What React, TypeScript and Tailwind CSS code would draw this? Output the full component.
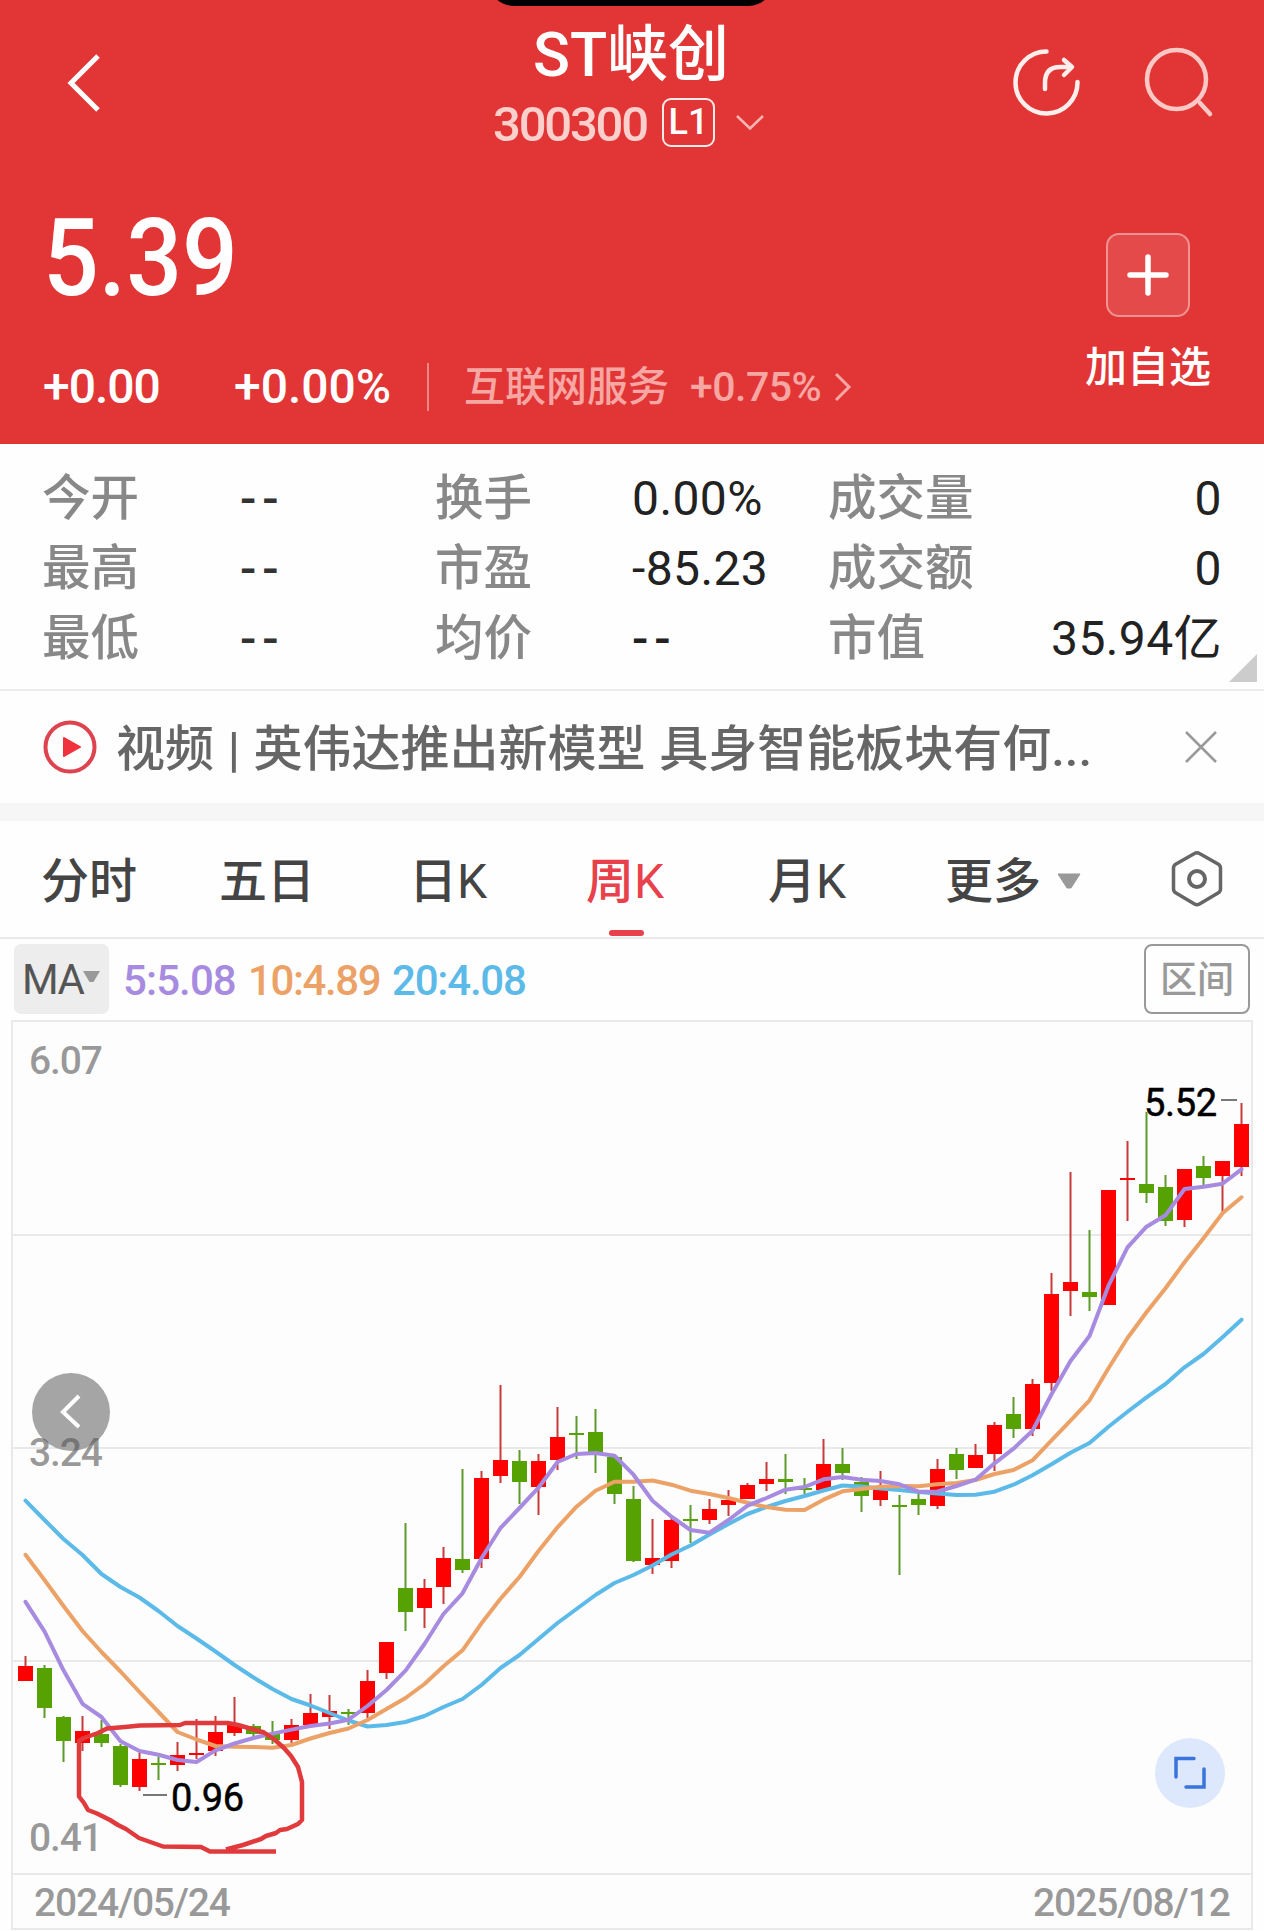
import React from 'react';

type Candle = [up: number, high: number, top: number, bottom: number, low: number];

// [1 = rise / 0 = fall, high, body top, body bottom, low] in chart pixels
const CANDLES: Candle[] = [
  [1, 1656, 1666, 1681, 1681], [0, 1665, 1668, 1708, 1718], [0, 1716, 1717, 1741, 1762], [1, 1716, 1731, 1743, 1751],
  [0, 1720, 1734, 1743, 1747], [0, 1744, 1746, 1785, 1787], [1, 1753, 1759, 1787, 1791], [0, 1757, 1763, 1765, 1780],
  [1, 1742, 1755, 1765, 1771], [1, 1719, 1753, 1755, 1759], [1, 1716, 1732, 1751, 1756], [1, 1697, 1725, 1733, 1736],
  [0, 1724, 1726, 1734, 1737], [0, 1721, 1733, 1740, 1744], [1, 1719, 1725, 1740, 1743], [1, 1694, 1713, 1725, 1725],
  [1, 1695, 1711, 1717, 1729], [0, 1709, 1712, 1714, 1725], [1, 1670, 1681, 1713, 1718], [1, 1642, 1642, 1673, 1679],
  [0, 1523, 1588, 1612, 1631], [1, 1579, 1588, 1608, 1628], [1, 1547, 1558, 1587, 1604], [0, 1469, 1559, 1570, 1573],
  [1, 1471, 1478, 1559, 1568], [1, 1385, 1460, 1476, 1483], [0, 1450, 1461, 1482, 1504], [1, 1454, 1461, 1487, 1515],
  [1, 1407, 1437, 1460, 1470], [0, 1416, 1433, 1435, 1459], [0, 1409, 1432, 1453, 1473], [0, 1456, 1457, 1494, 1504],
  [0, 1486, 1499, 1561, 1562], [1, 1519, 1558, 1565, 1574], [1, 1517, 1520, 1561, 1568], [0, 1505, 1519, 1521, 1543],
  [1, 1499, 1509, 1520, 1524], [1, 1490, 1500, 1505, 1516], [1, 1483, 1485, 1499, 1499], [1, 1462, 1479, 1484, 1491],
  [0, 1454, 1479, 1482, 1494], [0, 1478, 1488, 1490, 1494], [1, 1439, 1464, 1490, 1490], [0, 1448, 1464, 1473, 1480],
  [0, 1477, 1482, 1496, 1512], [1, 1471, 1489, 1500, 1506], [0, 1495, 1505, 1507, 1575], [0, 1493, 1499, 1505, 1515],
  [1, 1459, 1469, 1506, 1509], [0, 1448, 1454, 1470, 1479], [1, 1444, 1455, 1468, 1468], [1, 1422, 1425, 1454, 1471],
  [0, 1397, 1414, 1429, 1438], [1, 1379, 1384, 1429, 1436], [1, 1273, 1294, 1383, 1391], [1, 1172, 1282, 1291, 1316],
  [0, 1230, 1292, 1297, 1311], [1, 1190, 1190, 1305, 1305], [1, 1141, 1178, 1180, 1221], [0, 1112, 1184, 1193, 1203],
  [0, 1175, 1187, 1221, 1226], [1, 1169, 1169, 1220, 1227], [0, 1156, 1166, 1178, 1186], [1, 1161, 1161, 1176, 1212],
  [1, 1103, 1124, 1167, 1176],
];

const MA_LINES = [
  {
    color: '#5cbae8',
    ys: [1500.6, 1520, 1539, 1555, 1574, 1587, 1597.5, 1611, 1626, 1638.5, 1651.5, 1665, 1677.5, 1689, 1699, 1705.5, 1713, 1720.5, 1726.5, 1725, 1722, 1716, 1707, 1699, 1685, 1668, 1655, 1639, 1623, 1609, 1595, 1583, 1575, 1565.5, 1554.5, 1545.5, 1534.5, 1524, 1514, 1507, 1501, 1496, 1490.5, 1485.5, 1486.5, 1488.5, 1490, 1492, 1493.5, 1495, 1494.7, 1491.7, 1484.7, 1475.3, 1464.3, 1452.7, 1443, 1426.7, 1411.7, 1397.3, 1384, 1367.3, 1354, 1337.3, 1319.7],
  },
  {
    color: '#eca267',
    ys: [1554.8, 1580, 1606, 1631, 1652, 1671.5, 1692, 1712, 1732, 1739.5, 1746, 1746.7, 1747, 1747.8, 1745, 1738.5, 1733, 1728.5, 1720, 1709, 1698, 1684, 1666.3, 1650.3, 1623.3, 1598.7, 1577, 1551, 1527.3, 1506.7, 1490.7, 1481.7, 1481.7, 1480.5, 1484.7, 1490.7, 1494, 1498, 1502.7, 1507, 1509.7, 1510, 1499.7, 1491.3, 1489, 1486.7, 1486, 1486.3, 1484.3, 1483, 1480, 1474, 1470, 1460.3, 1440.3, 1420.7, 1400.3, 1368.3, 1338, 1312.3, 1288.3, 1262.3, 1238.3, 1213.3, 1197.3],
  },
  {
    color: '#a78be0',
    ys: [1601.8, 1631.3, 1670.3, 1703.8, 1717, 1741.3, 1751, 1754.8, 1760, 1762, 1750.4, 1743.5, 1738, 1733.6, 1729.6, 1726, 1723.5, 1719.7, 1706, 1690, 1670.7, 1644, 1614, 1593.3, 1558.3, 1528, 1508, 1487.7, 1462, 1454, 1453, 1455.7, 1474.7, 1500.7, 1516.7, 1530, 1532.7, 1520, 1505.7, 1498, 1489.7, 1487, 1479.3, 1477, 1479.7, 1481, 1484.3, 1491.7, 1491.5, 1486, 1479.7, 1463.3, 1448.7, 1430.7, 1394.3, 1361, 1336, 1285.7, 1247.3, 1226.7, 1215.3, 1189, 1186.7, 1183.7, 1169.3],
  },
];

const STATS = [
  [['今开', '--'], ['换手', '0.00%'], ['成交量', '0']],
  [['最高', '--'], ['市盈', '-85.23'], ['成交额', '0']],
  [['最低', '--'], ['均价', '--'], ['市值', '35.94亿']],
];

const xAt = (i: number) => 26 + i * 19;

const Header: React.FC = () => (
  <header className="relative h-[444px] bg-[#e23636] text-white">
    <div className="absolute -top-[22px] left-[488px] h-[28px] w-[286px] rounded-b-[26px] bg-black"></div>
    <div className="flex h-[160px] pt-[18px]">
      <svg className="ml-[60px] mt-[32px] h-[66px] w-[50px]" viewBox="0 0 50 66" fill="none" stroke="currentColor" strokeWidth="5">
        <path d="M38 6 L11 33 L38 60" />
      </svg>
      <div className="ml-[383px] w-[290px]">
        <h1 className="ml-[40px] h-[71px] whitespace-nowrap text-[61px] leading-[75px] font-medium">ST峡创</h1>
        <div className="flex h-[66px] items-center">
          <span className="w-[169px] pt-[5px] text-[49px] leading-none font-medium tracking-[-2.2px] text-[#fbd0cc]">300300</span>
          <span className="flex h-[49px] w-[53px] items-center justify-center rounded-[9px] border-2 border-white/90 text-[36px] leading-none font-medium">L1</span>
          <svg className="ml-[19px] h-[20px] w-[32px]" viewBox="0 0 32 20" fill="none" stroke="#f7b5b1" strokeWidth="2.5">
            <path d="M3 4 L16 16.500 L29 4" />
          </svg>
        </div>
      </div>
      <svg className="ml-[225px] mt-[25px] h-[80px] w-[80px]" viewBox="1008 43 80 80" fill="none" stroke="#ffeeec" strokeWidth="4.500" strokeLinecap="round">
        <path d="M1046.500 51.500 A31 31 0 1 0 1077.500 82" />
        <path d="M1045 89 V83 Q1045 67 1060 67 H1071" />
        <path d="M1064 60 L1072 67 L1064 75" strokeLinejoin="round" />
      </svg>
      <svg className="ml-[50px] mt-[25px] h-[80px] w-[80px]" viewBox="1138 43 80 80" fill="none" stroke="#fbc8c5" strokeWidth="4.500">
        <circle cx="1176.500" cy="79.500" r="29.500" />
        <path d="M1200 103 L1210 114" strokeLinecap="round" />
      </svg>
    </div>
    <div className="flex justify-between">
      <div className="pl-[43px]">
        <div className="mt-[44px] h-[107px] w-[230px] origin-left scale-x-[0.91] text-[108px] leading-[108px] font-medium">5.39</div>
        <div className="mt-[48px] flex h-[56px] items-center whitespace-nowrap leading-none font-medium">
          <span className="w-[191px] text-[48px] tracking-[-1px]">+0.00</span>
          <span className="w-[193px] text-[48px]">+0.00%</span>
          <span className="h-[48px] w-[2px] bg-white/40"></span>
          <span className="ml-[35px] w-[226px] text-[41px] text-[#f6a7a3]">互联网服务</span>
          <span className="w-[143px] text-[41px] tracking-[-0.500px] text-[#f6a7a3]">+0.75%</span>
          <svg className="h-[36px] w-[20px]" viewBox="0 0 20 36" fill="none" stroke="#f6a7a3" strokeWidth="3">
            <path d="M3 5 L16 18 L3 31" />
          </svg>
        </div>
      </div>
      <div className="mr-[53px] flex w-[126px] flex-col items-center pt-[73px]">
        <button className="flex size-[84px] items-center justify-center rounded-[13px] border-2 border-white/40 bg-white/10">
          <svg className="size-[44px]" viewBox="0 0 44 44" stroke="white" strokeWidth="5.500" strokeLinecap="round">
            <path d="M22 4 V40 M4 22 H40" />
          </svg>
        </button>
        <span className="mt-[27px] whitespace-nowrap text-[42px] leading-[48px] font-medium">加自选</span>
      </div>
    </div>
  </header>
);

const Value: React.FC<{ text: string }> = ({ text }) => (
  <span className={text === '--' ? 'font-medium tracking-[6px]' : 'font-normal tracking-[0.4px]'}>{text}</span>
);

const Stats: React.FC = () => (
  <section className="relative h-[247px] border-b-2 border-[#ebebeb] pt-[20px] text-[48px] leading-none font-medium">
    {STATS.map((row, r) => (
      <div key={r} className="flex h-[70px] items-center whitespace-nowrap pl-[42px] pr-[42px]">
        <span className="w-[198px] text-[48.5px] text-[#888]">{row[0][0]}</span>
        <span className="w-[195px] text-[#333]"><Value text={row[0][1]} /></span>
        <span className="w-[197px] text-[48.5px] text-[#888]">{row[1][0]}</span>
        <span className="w-[196px] text-[#222]"><Value text={row[1][1]} /></span>
        <span className="text-[48.5px] text-[#888]">{row[2][0]}</span>
        <span className="flex-1 text-right text-[#222]"><Value text={row[2][1]} /></span>
      </div>
    ))}
    <svg className="absolute right-[7px] bottom-[7px] h-[28px] w-[28px]" viewBox="0 0 28 28">
      <path d="M28 0 V28 H0 Z" fill="#ccc" />
    </svg>
  </section>
);

const News: React.FC = () => (
  <section className="flex h-[130px] items-center border-b-[18px] border-[#f6f6f6] pl-[43px] text-[#666]">
    <svg className="size-[54px] shrink-0" viewBox="0 0 54 54">
      <circle cx="27" cy="27" r="24.500" fill="none" stroke="#de4450" strokeWidth="4" />
      <path d="M21 18 L37 27 L21 36 Z" fill="#f0323c" stroke="#f0323c" strokeWidth="2" strokeLinejoin="round" />
    </svg>
    <p className="ml-[19px] w-[1068px] whitespace-nowrap pt-[5px] text-[49px] leading-none font-medium [word-spacing:1.5px]">视频 | 英伟达推出新模型 具身智能板块有何...</p>
    <svg className="size-[34px] shrink-0" viewBox="0 0 34 34" stroke="#999" strokeWidth="2.500">
      <path d="M2 2 L32 32 M32 2 L2 32" />
    </svg>
  </section>
);

const Tabs: React.FC = () => (
  <nav className="flex h-[118px] items-center whitespace-nowrap border-b-2 border-[#e9e9e9] pl-[41px] text-[48px] leading-none font-medium text-[#444] [&>span]:pt-[6px]">
    <span className="w-[178px]">分时</span>
    <span className="w-[190px]">五日</span>
    <span className="w-[177px]">日<b className="font-normal">K</b></span>
    <span className="relative w-[182px] text-[#e8414b]">
      周<b className="font-normal">K</b>
      <i className="absolute top-[78px] left-[23px] h-[6px] w-[35px] rounded-full bg-[#e8414b]"></i>
    </span>
    <span className="w-[177px]">月<b className="font-normal">K</b></span>
    <span className="w-[111px]">更多</span>
    <svg className="mt-[3px] h-[16px] w-[26px]" viewBox="0 0 26 16">
      <path d="M2 1 H24 L15 15 H11 Z" fill="#999" stroke="#999" strokeLinejoin="round" />
    </svg>
    <svg className="ml-[88px] h-[58px] w-[54px]" viewBox="0 0 54 58" fill="none" stroke="#666" strokeWidth="3.500" strokeLinejoin="round">
      <path d="M24.500 3.500 Q27 2 29.500 3.500 L48 14 Q50.500 15.500 50.500 18 V39 Q50.500 41.500 48 43 L29.500 54 Q27 55.500 24.500 54 L6 43 Q3.500 41.500 3.500 39 V18 Q3.500 15.500 6 14 Z" />
      <circle cx="27" cy="29" r="8" strokeWidth="4" />
    </svg>
  </nav>
);

const Indicators: React.FC = () => (
  <div className="flex h-[79px] items-center whitespace-nowrap pr-[14px] pl-[14px] text-[42px] leading-none font-medium">
    <button className="flex h-[70px] w-[95px] items-center rounded-[7px] bg-[#ededed] pl-[8px] text-[#555]">
      <span className="w-[61px] pt-[3px] font-normal tracking-[-1.500px]">MA</span>
      <svg className="-mt-[3px] h-[12px] w-[17px]" viewBox="0 0 17 12">
        <path d="M0 0 H17 L10.500 11 H6.500 Z" fill="#999" />
      </svg>
    </button>
    <span className="ml-[14px] w-[125px] pt-[4px] tracking-[-0.900px] text-[#a78be0]">5:5.08</span>
    <span className="w-[144px] pt-[4px] tracking-[-1.400px] text-[#eca267]">10:4.89</span>
    <span className="flex-1 pt-[4px] tracking-[-1.200px] text-[#5cbae8]">20:4.08</span>
    <button className="h-[70px] w-[106px] rounded-[8px] border-2 border-[#999] pt-[4px] text-[37px] text-[#999]">区间</button>
  </div>
);

const Chart: React.FC = () => (
  <svg className="block h-[913px] w-[1264px]" viewBox="0 1018 1264 913">
    <g stroke="#e9e9e9" strokeWidth="2" fill="none">
      <rect x="12" y="1021" width="1240" height="908" fill="#fdfdfd" />
      {[1235, 1448, 1661, 1874].map(y => (
        <path key={y} d={`M12 ${y} H1252`} />
      ))}
    </g>
    <circle cx="71" cy="1412" r="39" fill="#a5a5a5" />
    <path d="M79 1396 L63 1412 L79 1427" fill="none" stroke="white" strokeWidth="4" />
    <g fill="#555" fillOpacity="0.6" fontSize="39" fontWeight="500">
      <text x="29" y="1074" textLength="74">6.07</text>
      <text x="29" y="1466" textLength="74">3.24</text>
      <text x="29" y="1851" textLength="74">0.41</text>
      <text x="34" y="1916" textLength="197">2024/05/24</text>
      <text x="1033" y="1916" textLength="198">2025/08/12</text>
    </g>
    {CANDLES.map(([up, high, top, bottom, low], i) => (
      <g key={i}>
        <path d={`M${xAt(i) - 0.5} ${high} V${low}`} stroke={up ? '#c93a3a' : '#5c9a2b'} strokeWidth="2" />
        <rect x={xAt(i) - 8} y={top} width="15" height={bottom - top} fill={up ? '#fe0000' : '#57a203'} />
      </g>
    ))}
    {MA_LINES.map(line => (
      <polyline
        key={line.color}
        points={line.ys.map((y, i) => `${xAt(i) - 0.5},${y}`).join(' ')}
        fill="none"
        stroke={line.color}
        strokeWidth="4"
        strokeLinejoin="round"
        strokeLinecap="round"
      />
    ))}
    <path d="M143 1795 H167 M1221 1100 H1237" stroke="#777" strokeWidth="2" />
    <g fill="black" stroke="black" strokeWidth="0.500" fontSize="38">
      <text x="171" y="1811" textLength="73">0.96</text>
      <text x="1144" y="1116" textLength="73">5.52</text>
    </g>
    <path
      d="M276 1851.500 H210 L201 1847 L163 1846.500 L139 1838 L126 1829 L118 1825 L110 1820 L97 1813.500 L88 1810 L84 1803 L79 1796.500 V1741 L84 1738 L98 1733 L107 1728.500 L125 1727 L140 1725.500 L180 1725 L185 1723 H228 L238 1725 L252 1729 L264 1732.500 L275 1740 L284 1748 L291 1756 L298 1767 L302 1782 V1820 L298 1824 L287 1829 L280 1830 L276 1833 L266 1836 L261 1839 L243 1845 L226 1849.500"
      fill="none"
      stroke="#e03a3c"
      strokeWidth="4.500"
      strokeLinejoin="round"
    />
    <circle cx="1190" cy="1773" r="35" fill="#dee8fc" />
    <path d="M1176 1777 V1758.500 H1194 M1204 1769 V1787 H1186" fill="none" stroke="#3a74dc" strokeWidth="3.500" strokeLinecap="round" />
  </svg>
);

const App: React.FC = () => (
  <div className="h-[1931px] w-[1264px] overflow-hidden bg-[#fefefe] font-[Roboto,'Noto_Sans_CJK_SC',sans-serif]">
    <Header />
    <Stats />
    <News />
    <Tabs />
    <Indicators />
    <Chart />
  </div>
);

export default App;
